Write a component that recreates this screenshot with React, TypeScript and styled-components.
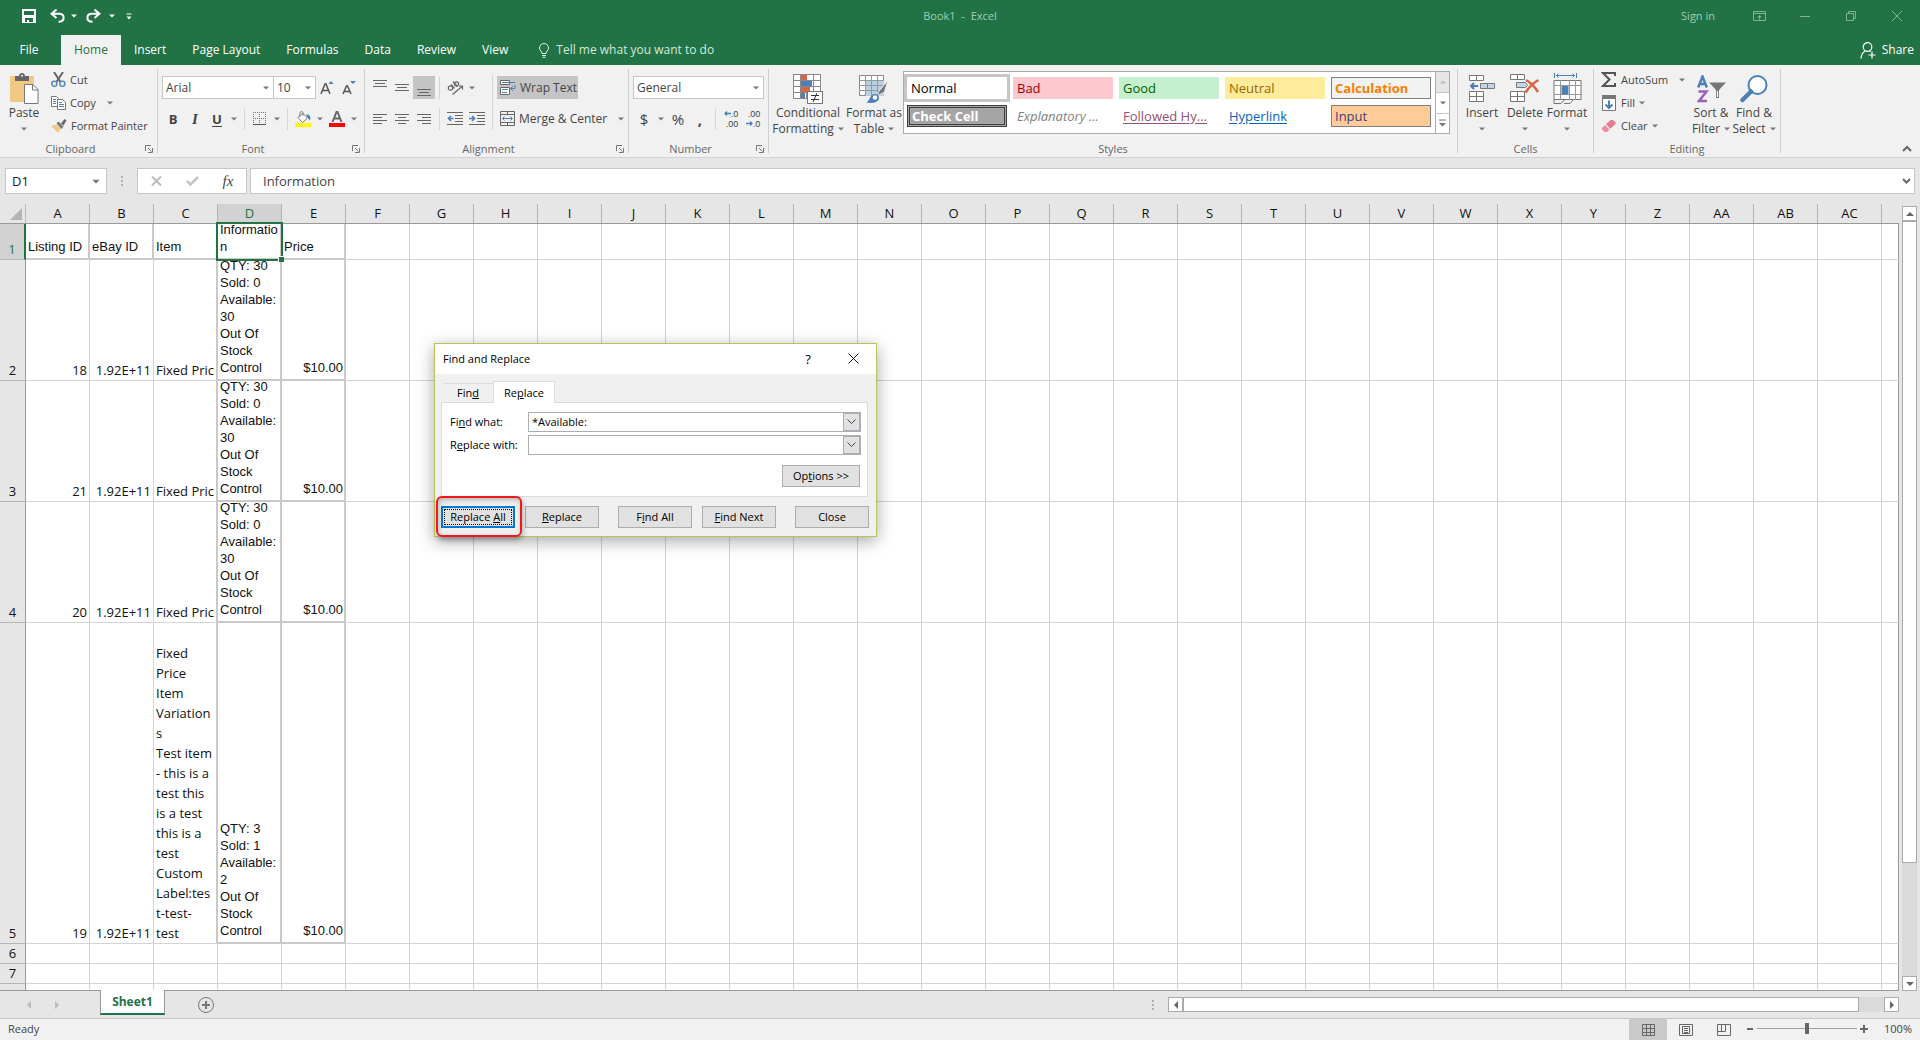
import React from "react";
import styled, { createGlobalStyle, css } from "styled-components";

const UI = `"Open Sans", "Noto Sans", sans-serif`;
const ARIAL = `"Liberation Sans", Arial, sans-serif`;
const GREEN = "#217346";
const INK = "#444444";
const GREY = "#777777";
const BLUE = "#4a7fb8";

const Global = createGlobalStyle`
  * { box-sizing: border-box; }
  html, body { margin: 0; height: 100%; }
  #root { height: 100vh; }
  body { background: #e6e6e6; overflow: hidden; }
  button, input, select { font: inherit; color: inherit; margin: 0; padding: 0; border: 0; background: none; border-radius: 0; }
  svg { display: block; flex: none; }
`;

const Window = styled.div`
  display: flex;
  flex-direction: column;
  height: 100%;
  font: 12px/16px ${UI};
  color: ${INK};
`;

/* ---------- title bar ---------- */
const TitleBar = styled.header`
  display: grid;
  grid-template-columns: 1fr auto 1fr;
  align-items: center;
  height: 35px;
  padding-bottom: 3px;
  background: ${GREEN};
  color: #a0cdb2;
  font-size: 11px;
`;
const QuickAccess = styled.div`
  display: flex;
  align-items: center;
  padding-left: 14px;
  color: #fff;
`;
const QuickButton = styled.button<{ $w?: number }>`
  display: grid;
  place-items: center;
  width: ${(p) => p.$w ?? 26}px;
  height: 22px;
`;
const Title = styled.h1`
  margin: 0;
  font: inherit;
  white-space: pre;
`;
const WindowButtons = styled.div`
  display: flex;
  justify-content: flex-end;
  align-items: center;
`;
const SignIn = styled.button`
  margin-right: 21px;
`;
const WindowButton = styled.button`
  display: grid;
  place-items: center;
  width: 46px;
  height: 28px;
  color: #7fb394;
`;

/* ---------- ribbon tabs ---------- */
const TabStrip = styled.nav`
  display: flex;
  height: 30px;
  background: ${GREEN};
  color: #fff;
  font-size: 12px;
`;
const RibbonTab = styled.button<{ $active?: boolean; $file?: boolean }>`
  padding: 0 13px;
  ${(p) => p.$file && css`width: 61px; padding: 0 3px 0 0;`}
  ${(p) => p.$active && css`background: #f1f1f1; color: ${GREEN};`}
`;
const TellMe = styled.button`
  display: flex;
  align-items: center;
  gap: 6px;
  padding-left: 17px;
  color: #d3e8db;
`;
const Share = styled.button`
  display: flex;
  align-items: center;
  gap: 6px;
  margin-left: auto;
  padding-right: 6px;
`;

/* ---------- ribbon ---------- */
const Ribbon = styled.div`
  display: flex;
  height: 93px;
  background: #f1f1f1;
  border-bottom: 1px solid #d2d2d2;
`;
const GroupBox = styled.section<{ $w: number }>`
  display: flex;
  flex-direction: column;
  flex: none;
  width: ${(p) => p.$w}px;
`;
const GroupBody = styled.div`
  display: flex;
  height: 76px;
`;
const GroupFoot = styled.div<{ $launch?: boolean }>`
  display: grid;
  grid-template-columns: ${(p) => (p.$launch ? "1fr 16px" : "1fr")};
  align-items: center;
  justify-items: center;
  height: 16px;
  color: #666;
  font-size: 11px;
`;
const GroupRule = styled.div`
  width: 1px;
  margin: 4px 0;
  background: #d0d0d0;
`;
const Rows = styled.div<{ $pad?: number }>`
  display: flex;
  flex-direction: column;
  gap: 8px;
  padding: 11px 0 0 ${(p) => p.$pad ?? 0}px;
`;
const Row = styled.div`
  display: flex;
  align-items: center;
  height: 23px;
`;
const Rule = styled.div<{ $tall?: boolean }>`
  flex: none;
  width: 1px;
  height: ${(p) => (p.$tall ? 55 : 22)}px;
  margin: ${(p) => (p.$tall ? "10px 4px 0" : "0 4px")};
  background: #d4d4d4;
`;
const IconButton = styled.button<{ $on?: boolean }>`
  display: grid;
  place-items: center;
  flex: none;
  width: 22px;
  height: 23px;
  background: ${(p) => (p.$on ? "#c5c5c5" : "none")};
`;
const CaretButton = styled.button`
  display: grid;
  place-items: center;
  flex: none;
  width: 12px;
  height: 22px;
`;
const Glyph = styled.span<{ $b?: boolean; $i?: boolean; $u?: boolean; $size?: number }>`
  font-size: ${(p) => p.$size ?? 13}px;
  font-weight: ${(p) => (p.$b ? 700 : 400)};
  font-family: ${(p) => (p.$i ? `"Liberation Serif", serif` : UI)};
  font-style: ${(p) => (p.$i ? "italic" : "normal")};
  text-decoration: ${(p) => (p.$u ? "underline" : "none")};
  text-underline-offset: 2px;
`;
const SmallStack = styled.div<{ $pad?: number; $w?: number }>`
  display: flex;
  flex-direction: column;
  align-items: flex-start;
  flex: none;
  width: ${(p) => (p.$w ? `${p.$w}px` : "auto")};
  padding: 3px 0 0 ${(p) => p.$pad ?? 0}px;
`;
const SmallButton = styled.button<{ $on?: boolean; $wide?: boolean }>`
  display: flex;
  align-items: center;
  gap: 4px;
  height: 23px;
  padding: 0 3px;
  white-space: nowrap;
  font-size: 11px;
  background: ${(p) => (p.$on ? "#c5c5c5" : "none")};
  svg:last-child:not(:first-child) { margin-left: ${(p) => (p.$wide ? 7 : 0)}px; }
`;
const ToggleText = styled(SmallButton)`
  width: 81px;
  font-size: 12px;
`;
const MergeButton = styled(SmallButton)`
  font-size: 12px;
`;
const BigButton = styled.button<{ $w: number }>`
  display: flex;
  flex-direction: column;
  align-items: center;
  flex: none;
  width: ${(p) => p.$w}px;
  padding-top: 7px;
  white-space: nowrap;
`;
const BigIcon = styled.span`
  display: grid;
  place-items: center;
  height: 33px;
`;
const BigLine = styled.span`
  display: flex;
  align-items: center;
  justify-content: center;
  gap: 4px;
  height: 16px;
`;
const ComboWrap = styled.div<{ $w: number }>`
  display: grid;
  align-items: center;
  flex: none;
  width: ${(p) => p.$w}px;
  height: 23px;
  background: #fff;
  border: 1px solid #c6c6c6;
  > * { grid-area: 1 / 1; }
  > svg { justify-self: end; margin-right: 4px; pointer-events: none; }
  & + & { border-left: 0; }
`;
const ComboSelect = styled.select`
  appearance: none;
  width: 100%;
  height: 21px;
  padding-left: 3px;
`;

/* ---------- styles gallery ---------- */
const Gallery = styled.div`
  display: flex;
  width: 547px;
  height: 63px;
  margin: 6px 0 0 2px;
  background: #fff;
  border: 1px solid #ababab;
`;
const GalleryGrid = styled.div`
  display: grid;
  grid-template-columns: repeat(5, 100px);
  grid-auto-rows: 22px;
  gap: 6px;
  flex: 1;
  padding: 5px 0 0 3px;
`;
const StyleTile = styled.button<{ $bg: string; $fg: string; $kind?: string }>`
  padding: 0 4px 1px;
  font-size: 13px;
  line-height: 18px;
  text-align: left;
  white-space: nowrap;
  background: ${(p) => p.$bg};
  color: ${(p) => p.$fg};
  ${(p) => p.$kind === "selected" && css`box-shadow: 0 0 0 3px #c6c6c6;`}
  ${(p) => p.$kind === "boxed" && css`border: 1px solid #7f7f7f; padding: 0 3px;`}
  ${(p) => p.$kind === "double" && css`border: 3px double #3f3f3f; padding: 0 2px; line-height: 14px;`}
  ${(p) => p.$kind === "link" && css`text-decoration: underline; text-underline-offset: 2px;`}
  ${(p) => p.$kind === "italic" && css`font-style: italic;`}
  font-weight: ${(p) => (p.$fg === "#fa7d00" || p.$fg === "#ffffff" ? 700 : 400)};
`;
const GalleryScroll = styled.div`
  display: grid;
  grid-template-rows: repeat(3, 1fr);
  width: 14px;
  border-left: 1px solid #ababab;
`;
const GalleryArrow = styled.button<{ $off?: boolean }>`
  display: grid;
  place-items: center;
  background: ${(p) => (p.$off ? "#e6e6e6" : "#fff")};
  & + & { border-top: 1px solid #c6c6c6; }
`;
const Collapse = styled.button`
  align-self: flex-end;
  margin: 0 8px 5px auto;
`;

/* ---------- formula bar ---------- */
const FormulaBar = styled.div`
  display: flex;
  align-items: center;
  height: 46px;
  padding: 0 5px;
  font: 13px/20px ${UI};
`;
const NameBox = styled.label`
  display: flex;
  align-items: center;
  width: 102px;
  height: 26px;
  padding: 0 6px;
  background: #fff;
  border: 1px solid #c6c6c6;
`;
const NameInput = styled.input`
  flex: 1;
  min-width: 0;
  color: #222;
`;
const Grip = styled.div`
  display: grid;
  place-items: center;
  width: 30px;
`;
const FormulaActions = styled.div`
  display: flex;
  align-items: center;
  justify-content: space-around;
  width: 110px;
  height: 26px;
  margin-right: 3px;
  background: #fff;
  border: 1px solid #c6c6c6;
`;
const FormulaField = styled.label`
  display: flex;
  align-items: center;
  flex: 1;
  height: 26px;
  padding: 0 3px 0 12px;
  background: #fff;
  border: 1px solid #c6c6c6;
`;
const FormulaInput = styled.input`
  flex: 1;
`;

/* ---------- sheet ---------- */
const SheetArea = styled.main`
  display: flex;
  flex: 1;
  min-height: 0;
`;
const SheetFrame = styled.div`
  flex: 1;
  overflow: hidden;
  border-bottom: 1px solid #999;
`;
const Sheet = styled.table`
  width: 100%;
  table-layout: fixed;
  border-collapse: separate;
  border-spacing: 0;
  color: #111;
`;
const Corner = styled.th`
  width: 26px;
  height: 20px;
  padding: 0 3px 3px 0;
  vertical-align: bottom;
  border-right: 1px solid #bbb;
  border-bottom: 1px solid #999;
  svg { margin-left: auto; }
`;
const ColHead = styled.th<{ $on?: boolean; $fill?: boolean }>`
  width: ${(p) => (p.$fill ? "auto" : "64px")};
  height: 20px;
  padding: 0 0 1px;
  font: 13px/18px ${UI};
  color: ${(p) => (p.$on ? GREEN : "#111")};
  background: ${(p) => (p.$on ? "#d2d2d2" : "#e6e6e6")};
  border-right: ${(p) => (p.$fill ? "0" : "1px solid #b4b4b4")};
  border-bottom: 1px solid #999;
`;
const RowHead = styled.th<{ $h: number; $on?: boolean }>`
  height: ${(p) => p.$h}px;
  padding: 0 0 1px;
  vertical-align: bottom;
  font: 13px/18px ${UI};
  color: ${(p) => (p.$on ? GREEN : "#111")};
  background: ${(p) => (p.$on ? "#d2d2d2" : "#e6e6e6")};
  border-bottom: 1px solid #b4b4b4;
  border-right: ${(p) => (p.$on ? `2px solid ${GREEN}` : "1px solid #999")};
`;
const Cell = styled.td<{ $r?: boolean; $b?: boolean; $edge?: boolean; $sel?: boolean }>`
  padding: 0;
  vertical-align: bottom;
  background: #fff;
  border-right: ${(p) => (p.$edge ? "1px solid #999" : p.$r ? "2px solid #c9c9c9" : "1px solid #d4d4d4")};
  border-bottom: ${(p) => (p.$b ? "2px solid #c9c9c9" : "1px solid #d4d4d4")};
  ${(p) => p.$sel && css`
    position: relative;
    &::before {
      content: "";
      position: absolute;
      inset: -2px -3px -3px -2px;
      border: 2px solid ${GREEN};
    }
    &::after {
      content: "";
      position: absolute;
      right: -4px;
      bottom: -4px;
      width: 5px;
      height: 5px;
      background: ${GREEN};
      box-shadow: -1px -1px 0 #fff;
    }
  `}
`;
const CellText = styled.div<{ $h: number; $arial?: boolean; $right?: boolean }>`
  display: flex;
  flex-direction: column;
  justify-content: flex-end;
  height: ${(p) => p.$h}px;
  padding: 0 ${(p) => (p.$right && p.$arial ? 1 : 2)}px ${(p) => (p.$arial ? 3 : 0)}px 2px;
  overflow: ${(p) => (p.$arial ? "visible" : "hidden")};
  white-space: pre;
  font: ${(p) => (p.$arial ? `13px/17px ${ARIAL}` : `13px/20px ${UI}`)};
  text-align: ${(p) => (p.$right ? "right" : "left")};
`;
const VScroll = styled.div`
  display: flex;
  flex-direction: column;
  width: 21px;
  padding: 2px 3px 0;
`;
const ScrollArrow = styled.button`
  display: grid;
  place-items: center;
  flex: none;
  width: 15px;
  height: 15px;
  background: #fff;
  border: 1px solid #ababab;
`;
const VTrack = styled.div`
  flex: 1;
  background: #dadada;
`;
const VThumb = styled.div`
  height: 85%;
  background: #fff;
  border: 1px solid #ababab;
`;
const SheetBar = styled.div`
  display: flex;
  height: 27px;
`;
const SheetNav = styled.div`
  display: flex;
  align-items: center;
  gap: 18px;
  width: 100px;
  padding-left: 24px;
`;
const NavArrow = styled.button`
  display: grid;
  place-items: center;
  width: 10px;
  height: 20px;
`;
const SheetTab = styled.button`
  width: 65px;
  height: 25px;
  margin-top: -1px;
  position: relative;
  background: #fff;
  border: 1px solid #999;
  border-top: 0;
  border-bottom: 2px solid ${GREEN};
  color: ${GREEN};
  font-size: 12px;
  font-weight: 700;
`;
const AddSheet = styled.button`
  margin-left: 33px;
`;
const HScroll = styled.div`
  display: flex;
  align-items: center;
  flex: 0 1 761px;
  margin: 0 21px 0 auto;
`;
const HTrack = styled.div`
  flex: 1;
  height: 15px;
  background: #dadada;
`;
const HThumb = styled.div`
  width: 96.4%;
  height: 15px;
  background: #fff;
  border: 1px solid #ababab;
`;
const StatusBar = styled.footer`
  display: flex;
  align-items: center;
  height: 22px;
  padding: 0 8px 2px;
  background: #f1f1f1;
  border-top: 1px solid #c6c6c6;
  font-size: 11px;
`;
const ViewButtons = styled.div`
  display: flex;
  align-self: flex-start;
  margin-left: auto;
`;
const ViewButton = styled.button<{ $on?: boolean }>`
  display: grid;
  place-items: center;
  width: 38px;
  height: 21px;
  background: ${(p) => (p.$on ? "#c9c9c9" : "none")};
`;
const ZoomButton = styled.button`
  display: grid;
  place-items: center;
  width: 14px;
  height: 20px;
`;
const ZoomRange = styled.input`
  appearance: none;
  width: 100px;
  height: 12px;
  background: linear-gradient(#a0a0a0, #a0a0a0) center / 100% 1px no-repeat;
  &::-webkit-slider-thumb {
    appearance: none;
    width: 4px;
    height: 11px;
    background: #666;
  }
`;
const ZoomText = styled.button`
  width: 41px;
  text-align: right;
`;

/* ---------- dialog ---------- */
const Dialog = styled.div`
  position: absolute;
  left: 434px;
  top: 343px;
  width: 443px;
  background: #f0f0f0;
  border: 1px solid #bcc257;
  box-shadow: 0 4px 16px rgba(0, 0, 0, 0.35);
  color: #000;
  font: 12px/16px ${UI};
`;
const DialogTitle = styled.div`
  display: flex;
  align-items: center;
  height: 30px;
  padding: 0 13px 1px 8px;
  background: #fff;
`;
const DialogName = styled.h2`
  flex: 1;
  margin: 0;
  font: inherit;
  font-size: 11px;
`;
const DialogIcon = styled.button`
  display: grid;
  place-items: center;
  width: 20px;
  height: 24px;
  & + & { margin-left: 25px; }
`;
const DialogBody = styled.div`
  padding: 7px 7px 8px 6px;
  font-size: 11px;
`;
const DialogTabs = styled.div`
  display: flex;
  align-items: flex-end;
  padding-left: 2px;
`;
const DialogTab = styled.button<{ $on?: boolean }>`
  width: ${(p) => (p.$on ? 62 : 50)}px;
  height: ${(p) => (p.$on ? 22 : 19)}px;
  border: 1px solid #dcdcdc;
  border-bottom: 0;
  ${(p) => p.$on ? css`background: #fff; margin-bottom: -1px;` : css`border-left: 0; border-right: 0;`}
`;
const DialogPanel = styled.div`
  height: 95px;
  padding: 9px 6px 0 8px;
  margin-right: 1px;
  background: #fff;
  border: 1px solid #dcdcdc;
`;
const Field = styled.div`
  display: grid;
  grid-template-columns: 78px 1fr;
  align-items: center;
  margin-bottom: 3px;
`;
const FieldBox = styled.div`
  display: flex;
  height: 20px;
  background: #fff;
  border: 1px solid #abadb3;
`;
const FieldInput = styled.input`
  flex: 1;
  min-width: 0;
  padding-left: 3px;
`;
const FieldDrop = styled.button`
  display: grid;
  place-items: center;
  width: 17px;
  background: #e1e1e1;
  border: 1px solid #abadb3;
`;
const PushButton = styled.button<{ $focus?: boolean; $w?: number }>`
  display: block;
  width: ${(p) => p.$w ?? 74}px;
  height: 22px;
  background: #e1e1e1;
  border: 1px solid #adadad;
  ${(p) => p.$focus && css`border: 2px solid #0078d7; outline: 1px dotted #000; outline-offset: -4px;`}
`;
const OptionsRow = styled.div`
  display: flex;
  justify-content: flex-end;
  padding: 7px 1px 0 0;
`;
const DialogActions = styled.div`
  display: flex;
  padding-top: 9px;
  gap: 10px;
`;
const Spacer = styled.div`
  width: 9px;
  margin-right: -10px;
`;
const Highlight = styled.div`
  position: absolute;
  left: 1px;
  top: 152px;
  width: 86px;
  height: 41px;
  border: 2px solid #f01818;
  border-radius: 6px;
  box-shadow: 1px 3px 5px rgba(0, 0, 0, 0.3), inset 1px 2px 5px rgba(0, 0, 0, 0.25);
  pointer-events: none;
`;

/* ---------- icons ---------- */
const Caret = ({ c = GREY, big }: { c?: string; big?: boolean }) => (
  <svg width={big ? 8 : 6} height={big ? 5 : 4} viewBox="0 0 6 4"><path d="M0 0.5h6L3 3.5z" fill={c} /></svg>
);
const Tri = ({ d, c = "#666" }: { d: "l" | "r" | "u" | "d"; c?: string }) => {
  const p = { l: "M6 0v8L2 4z", r: "M2 0v8l4-4z", u: "M0 6h8L4 2z", d: "M0 2h8L4 6z" }[d];
  return <svg width="8" height="8" viewBox="0 0 8 8"><path d={p} fill={c} /></svg>;
};
const Launcher = () => (
  <svg width="8" height="8" viewBox="0 0 8 8" fill="none" stroke={GREY}>
    <path d="M0.5 6V0.5H6M3 3l3.5 3.5M7.5 3v4.5H3" />
  </svg>
);
const Lines = ({ rows, ys, w = 14, h = 16 }: { rows: [number, number][]; ys: number[]; w?: number; h?: number }) => (
  <svg width={w} height={h} viewBox={`0 0 ${w} ${h}`} shapeRendering="crispEdges">
    {rows.map(([a, b], i) => <rect key={i} x={a} y={ys[i]} width={b - a} height="1" fill="#666" />)}
  </svg>
);
const SaveIcon = () => (
  <svg width="14" height="14" viewBox="0 0 14 14"><path fill="#fff" fillRule="evenodd" d="M0 0h14v14H0zM2 2v4h10V2zM3 9v4h2v-2h2v2h4V9z" /></svg>
);
const UndoIcon = ({ flip }: { flip?: boolean }) => (
  <svg width="15" height="14" viewBox="0 0 15 14" fill="none" stroke="#fff" strokeWidth="2">
    <g transform={flip ? "matrix(-1 0 0 1 15 0)" : undefined}><path d="M6.5 0.5L1.5 4.7l5 4.3M2 4.7h7c3 0 4.600 1.500 4.600 4S12 12.700 8.500 12.700" /></g>
  </svg>
);
const CustomizeIcon = () => (
  <svg width="6" height="7" viewBox="0 0 6 7"><path d="M0.500 0.500h5v1h-5zM0.500 3.500h5L3 6.500z" fill="#fff" /></svg>
);
const BulbIcon = () => (
  <svg width="12" height="15" viewBox="0 0 12 15" fill="none" stroke="#e6f2ea">
    <path d="M4 10.500c0-2-2.500-3-2.500-5.500a4.500 4.500 0 0 1 9 0c0 2.500-2.500 3.500-2.500 5.500zM4 12.500h4M4.500 14.300h3" />
  </svg>
);
const ShareIcon = () => (
  <svg width="16" height="17" viewBox="0 0 16 17" fill="none" stroke="#fff" strokeWidth="1.200">
    <circle cx="7.500" cy="5" r="4.300" /><path d="M1 16.500c.3-4 2-6.300 4.500-7.500M9.500 9l1 .8M12 9.500v7M8.500 13h7" />
  </svg>
);
const PasteIcon = () => (
  <svg width="30" height="31" viewBox="0 0 30 31">
    <path d="M1 3h24v26H1z" fill="#f0c982" /><path d="M6 3h4c0-4 6-4 6 0h4v5H6z" fill="#666" /><circle cx="13" cy="2.800" r="1" fill="#f1f1f1" />
    <path d="M15.500 11.500h8.500l5 5V30.500H15.500z" fill="#fff" stroke="#777" /><path d="M23.500 11.500v5.500h5.500" fill="none" stroke="#777" />
  </svg>
);
const CutIcon = () => (
  <svg width="15" height="15" viewBox="0 0 15 15" fill="none">
    <path d="M3 0l6.500 10M12 0L5.500 10" stroke="#666" strokeWidth="2" />
    <circle cx="3.300" cy="11.700" r="2.600" stroke={BLUE} strokeWidth="1.300" /><circle cx="11.300" cy="11.700" r="2.600" stroke={BLUE} strokeWidth="1.300" />
  </svg>
);
const CopyIcon = () => (
  <svg width="15" height="14" viewBox="0 0 15 14" fill="#fff" stroke="#777">
    <path d="M0.500 0.500h5l2 2v8h-7z" /><path d="M6.500 3.500h5l3 3v7h-8z" />
    <path d="M2 3.500h3M2 5.500h3M2 7.500h3M8 6.500h3M8 8.500h5M8 10.500h5" stroke={BLUE} />
  </svg>
);
const BrushIcon = () => (
  <svg width="16" height="14" viewBox="0 0 16 14">
    <path d="M0 7l5-1.500 5 4L7 14C4.500 11 2.500 9 0 7z" fill="#f0c982" />
    <path d="M5.500 4.500l2-2 5 5-2 2.500z" fill="#777" /><path d="M10 4.500l3.500-4.500 2 1.500-3 5z" fill="#666" />
  </svg>
);
const GrowIcon = ({ down }: { down?: boolean }) => (
  <svg width="15" height="16" viewBox="0 0 15 16">
    <path d={down ? "M1 14L4.500 6h1L9 14M2.500 11.500h5" : "M1 14L5 4h1l4 10M2.500 10.500h6"} fill="none" stroke="#555" strokeWidth="1.500" />
    <path d={down ? "M8 1h6l-3 3z" : "M8.500 4h5L11 1z"} fill={BLUE} />
  </svg>
);
const BorderIcon = () => (
  <svg width="14" height="14" viewBox="0 0 14 14" fill="none" stroke="#777">
    <path d="M0 0.500h13M0 6.500h13M0.500 0v13M6.500 0v13M12.500 0v13" strokeDasharray="1 1" /><path d="M0 12.500h13" stroke="#555" />
  </svg>
);
const FillIcon = () => (
  <svg width="17" height="16" viewBox="0 0 17 16">
    <path d="M3 6.500L7.500 2l5 5-5 4.500z" fill="#fff" stroke="#777" /><path d="M5 6V2.500c0-3 3-3 3 0V5" fill="none" stroke="#777" />
    <path d="M11 3.500c4-.5 5 2 4 6l-2.500-3z" fill={BLUE} /><path d="M0 12h16v4H0z" fill="#ff0" />
  </svg>
);
const FontColorIcon = () => (
  <svg width="16" height="16" viewBox="0 0 16 16">
    <path d="M3.500 11L7.500 1h1l4 10M5 7.500h6" fill="none" stroke="#666" strokeWidth="2" /><path d="M0 12h16v4H0z" fill="#f00" />
  </svg>
);
const OrientIcon = () => (
  <svg width="17" height="16" viewBox="0 0 17 16" fill="none" stroke="#666" strokeWidth="1.200">
    <circle cx="3.500" cy="8" r="2.200" /><path d="M4 4.500l3.500 4M6 1.500l4.500 5" /><circle cx="9.500" cy="4" r="2.200" />
    <path d="M5.500 14.500l9.500-8M12 6h3.500v3.500" />
  </svg>
);
const IndentIcon = ({ inc }: { inc?: boolean }) => (
  <svg width="17" height="13" viewBox="0 0 17 13" fill="none">
    <path d="M0 0.500h16M8 3.500h8M8 6.500h8M8 9.500h8M0 12.500h16" stroke="#666" />
    <path d={inc ? "M0 6.500h5M3 4l2.500 2.500L3 9" : "M6.500 6.500h-5M4 4L1.500 6.500 4 9"} stroke={BLUE} strokeWidth="1.600" />
  </svg>
);
const WrapIcon = () => (
  <svg width="16" height="15" viewBox="0 0 16 15" fill="none">
    <path d="M0.500 0.500h9v4h-9zM0.500 7.500h9v7h-9z" fill="#fff" stroke="#666" />
    <path d="M2 2.500h13M2 9.500h6M2 12.500h5M15 5v3.500h-4M13 6l-2.500 2.500L13 11" stroke={BLUE} />
  </svg>
);
const MergeIcon = () => (
  <svg width="15" height="15" viewBox="0 0 15 15" fill="none">
    <path d="M0.500 0.500h14v14H0.500zM0.500 3.500h14M0.500 11.500h14M7.500 0.500v3M7.500 11.500v3" stroke="#666" />
    <path d="M3 7.500h9M4.500 5.500l-2 2 2 2M10.500 5.500l2 2-2 2" stroke={BLUE} />
  </svg>
);
const DecimalText = styled.span`
  display: grid;
  justify-items: end;
  font: 9px/10px ${ARIAL};
`;
const DecimalLine = styled.span`
  display: flex;
  align-items: center;
  height: 10px;
`;
const SmallArrow = ({ right }: { right?: boolean }) => (
  <svg width="7" height="5" viewBox="0 0 7 5" fill="none" stroke={BLUE} strokeWidth="1.300">
    <path d={right ? "M0 2.500h6M4 0.500l2 2-2 2" : "M7 2.500H1M3 0.500l-2 2 2 2"} />
  </svg>
);
const ConditionalIcon = () => (
  <svg width="30" height="31" viewBox="0 0 30 31" shapeRendering="crispEdges">
    <path d="M0.500 1.500h27v24h-27z" fill="#fff" stroke="#888" />
    <path d="M7.500 1v25M13.500 1v25M20.500 1v25M0 7.500h28M0 13.500h28M0 19.500h28" stroke="#888" />
    <path d="M8 2h6v5H8zM8 14h9v5H8z" fill="#d86545" /><path d="M8 8h11v5H8zM8 20h4v5H8z" fill={BLUE} />
    <path d="M14.500 18.500h15v12h-15z" fill="#fff" stroke="#777" />
    <path d="M18 22.500h8M18 26.500h8M24 20l-4 9" stroke="#333" shapeRendering="auto" />
  </svg>
);
const TableIcon = () => (
  <svg width="30" height="30" viewBox="0 0 30 30">
    <path d="M0.500 1.500h24v20h-24z" fill="#fff" stroke="#888" /><path d="M7 7h18v15H7z" fill="#b9cfe6" />
    <path d="M6.500 1v21M12.500 1v21M18.500 1v21M0 6.500h25M0 11.500h25M0 16.500h25" stroke="#999" fill="none" />
    <path d="M29 6l-3.500 12-5 3-2-2z" fill="#777" stroke="#f1f1f1" /><path d="M7 28.500c4-1 4-9 9-8.500 4 .5 5 4 3 6.500s-7 3-12 2z" fill={BLUE} /><circle cx="16" cy="23.500" r="2.300" fill="#fff" />
  </svg>
);
const InsertIcon = () => (
  <svg width="27" height="28" viewBox="0 0 27 28" fill="#fff" stroke="#777">
    <path d="M0.500 0.500h14v5h-14zM7.500 0.500v5M0.500 16.500h14v10h-14zM7.500 16.500v10M0.500 21.500h14" />
    <path d="M11.500 8.500h14v5h-14zM18.500 8.500v5" fill="#c0d4ea" /><path d="M9 11H2M5 8l-3 3 3 3" fill="none" stroke={BLUE} strokeWidth="2" />
  </svg>
);
const DeleteIcon = () => (
  <svg width="30" height="29" viewBox="0 0 30 29" fill="#fff" stroke="#777">
    <path d="M0.500 0.500h14v5h-14zM7.500 0.500v5M0.500 17.500h14v10h-14zM7.500 17.500v10M0.500 22.500h14" /><path d="M6.500 8.500h9l2 3-2 2h-9z" fill="#c0d4ea" />
    <path d="M16 6c5 3 9 7 12 12M28.500 6C23 9 19 13 15.500 18.500" fill="none" stroke="#d9623f" strokeWidth="2.500" />
  </svg>
);
const FormatIcon = () => (
  <svg width="29" height="31" viewBox="0 0 29 31" fill="none" stroke="#777">
    <path d="M1 7.500h27v19H1z" fill="#fff" /><path d="M7.500 7v20M16.500 7v20M22.500 7v20M1 12.500h27M1 21.500h27" stroke="#999" />
    <path d="M8.500 13h7v8.500h-7z" fill={BLUE} stroke="none" /><path d="M1 26.500v4h7l3-3.500M11 30.500h6l3-3.500" />
    <path d="M1.500 0v5M23.500 0v5M3 2.500h19M5.500 0.500l-2 2 2 2M19.500 0.500l2 2-2 2" stroke={BLUE} />
  </svg>
);
const SigmaIcon = () => (
  <svg width="16" height="16" viewBox="0 0 16 16" fill="none" stroke="#555" strokeWidth="2"><path d="M14 4V1H2l6.500 6.500L2 14h12v-3" /></svg>
);
const FillDownIcon = () => (
  <svg width="16" height="16" viewBox="0 0 16 16"><path d="M1.500 0.500h13v15h-13z" fill="#fff" stroke="#777" /><path d="M1 0h14v4H1z" fill="#777" /><path d="M8 5.500v7M4.500 9.500L8 13l3.500-3.500" fill="none" stroke={BLUE} strokeWidth="2" /></svg>
);
const EraserIcon = () => (
  <svg width="16" height="14" viewBox="0 0 16 14"><path d="M1 9l3-3 4.500 4.500L6 13H3.500L1 10.500z" fill="#ea8ea0" /><path d="M5 5.200L9.500 1H12l2.500 2.500V5L9.500 9.700z" fill="#e67c90" /></svg>
);
const SortIcon = () => (
  <svg width="29" height="28" viewBox="0 0 29 28" fill="none" strokeWidth="2.500">
    <path d="M1.200 12.500L5.500 1.500l4.300 11M3 9h5" stroke={BLUE} /><path d="M1.500 16.500h8L2 26h8" stroke="#9b5fb5" />
    <path d="M12 7.500h17l-7 7.500v8h-3v-8z" fill="#777" /><path d="M20.500 16v6" stroke="#fff" strokeWidth="1.200" />
  </svg>
);
const FindIcon = () => (
  <svg width="28" height="28" viewBox="0 0 28 28" fill="none" stroke={BLUE}><circle cx="17.500" cy="10" r="9" fill="#fff" strokeWidth="2" /><path d="M11 16.500L2.500 25" strokeWidth="4.500" strokeLinecap="round" /></svg>
);

const Carets = () => <CaretButton aria-label="More"><Caret /></CaretButton>;

function Group({ w, label, launch, children }: { w: number; label: string; launch?: boolean; children: React.ReactNode }) {
  return (
    <>
      <GroupBox $w={w - 1} aria-label={label}>
        <GroupBody>{children}</GroupBody>
        <GroupFoot $launch={launch}><span>{label}</span>{launch && <Launcher />}</GroupFoot>
      </GroupBox>
      <GroupRule />
    </>
  );
}

function Big({ w, icon, lines }: { w: number; icon: React.ReactNode; lines: string[] }) {
  return (
    <BigButton $w={w}>
      <BigIcon>{icon}</BigIcon>
      <BigLine>{lines[0]}</BigLine>
      <BigLine>{lines[1]}<Caret /></BigLine>
    </BigButton>
  );
}

function Combo({ w, value, label }: { w: number; value: string; label: string }) {
  return (
    <ComboWrap $w={w}>
      <ComboSelect aria-label={label} defaultValue={value}><option>{value}</option></ComboSelect>
      <Caret />
    </ComboWrap>
  );
}

const TILES: [string, string, string, string?][] = [
  ["Normal", "#ffffff", "#000000", "selected"],
  ["Bad", "#ffc7ce", "#9c0006"],
  ["Good", "#c6efce", "#006100"],
  ["Neutral", "#ffeb9c", "#9c6500"],
  ["Calculation", "#f2f2f2", "#fa7d00", "boxed"],
  ["Check Cell", "#a5a5a5", "#ffffff", "double"],
  ["Explanatory ...", "#ffffff", "#7f7f7f", "italic"],
  ["Followed Hy...", "#ffffff", "#954f72", "link"],
  ["Hyperlink", "#ffffff", "#0563c1", "link"],
  ["Input", "#ffcc99", "#3f3f76", "boxed"],
];

function RibbonBar() {
  return (
    <Ribbon>
      <Group w={158} label="Clipboard" launch>
        <Big w={48} icon={<PasteIcon />} lines={["Paste", ""]} />
        <SmallStack>
          <SmallButton><CutIcon />Cut</SmallButton>
          <SmallButton $wide><CopyIcon />Copy<Caret /></SmallButton>
          <SmallButton><BrushIcon />Format Painter</SmallButton>
        </SmallStack>
      </Group>
      <Group w={207} label="Font" launch>
        <Rows $pad={4}>
          <Row>
            <Combo w={112} value="Arial" label="Font" />
            <Combo w={42} value="10" label="Font size" />
            <IconButton aria-label="Increase font size"><GrowIcon /></IconButton>
            <IconButton aria-label="Decrease font size"><GrowIcon down /></IconButton>
          </Row>
          <Row>
            <IconButton><Glyph $b>B</Glyph></IconButton>
            <IconButton><Glyph $i $b $size={15}>I</Glyph></IconButton>
            <IconButton><Glyph $b $u>U</Glyph></IconButton>
            <Carets /><Rule />
            <IconButton aria-label="Borders"><BorderIcon /></IconButton>
            <Carets /><Rule />
            <IconButton aria-label="Fill color"><FillIcon /></IconButton>
            <Carets />
            <IconButton aria-label="Font color"><FontColorIcon /></IconButton>
            <Carets />
          </Row>
        </Rows>
      </Group>
      <Group w={264} label="Alignment" launch>
        <Rows $pad={4}>
          <Row>
            <IconButton aria-label="Top align"><Lines rows={[[0, 14], [2, 12], [0, 14]]} ys={[0, 3, 6]} /></IconButton>
            <IconButton aria-label="Middle align"><Lines rows={[[0, 14], [2, 12], [0, 14]]} ys={[4, 7, 10]} /></IconButton>
            <IconButton $on aria-label="Bottom align"><Lines rows={[[0, 14], [2, 12], [0, 14]]} ys={[9, 12, 15]} /></IconButton>
            <Rule />
            <IconButton aria-label="Orientation"><OrientIcon /></IconButton>
            <Carets />
          </Row>
          <Row>
            <IconButton aria-label="Align left"><Lines rows={[[0, 14], [0, 9], [0, 14], [0, 9]]} ys={[3, 6, 9, 12]} /></IconButton>
            <IconButton aria-label="Center"><Lines rows={[[0, 14], [3, 11], [0, 14], [3, 11]]} ys={[3, 6, 9, 12]} /></IconButton>
            <IconButton aria-label="Align right"><Lines rows={[[0, 14], [5, 14], [0, 14], [5, 14]]} ys={[3, 6, 9, 12]} /></IconButton>
            <Rule />
            <IconButton aria-label="Decrease indent"><IndentIcon /></IconButton>
            <IconButton aria-label="Increase indent"><IndentIcon inc /></IconButton>
          </Row>
        </Rows>
        <Rule $tall />
        <Rows>
          <Row><ToggleText $on><WrapIcon />Wrap Text</ToggleText></Row>
          <Row><MergeButton $wide><MergeIcon />Merge &amp; Center<Caret /></MergeButton></Row>
        </Rows>
      </Group>
      <Group w={140} label="Number" launch>
        <Rows $pad={4}>
          <Row><Combo w={131} value="General" label="Number format" /></Row>
          <Row>
            <IconButton><Glyph $size={15}>$</Glyph></IconButton>
            <Carets />
            <IconButton><Glyph $size={15}>%</Glyph></IconButton>
            <IconButton><Glyph $b $size={15}>,</Glyph></IconButton>
            <Rule />
            <IconButton aria-label="Increase decimal"><DecimalText><DecimalLine><SmallArrow />.0</DecimalLine><DecimalLine>.00</DecimalLine></DecimalText></IconButton>
            <IconButton aria-label="Decrease decimal"><DecimalText><DecimalLine>.00</DecimalLine><DecimalLine><SmallArrow right />.0</DecimalLine></DecimalText></IconButton>
          </Row>
        </Rows>
      </Group>
      <Group w={689} label="Styles">
        <Big w={78} icon={<ConditionalIcon />} lines={["Conditional", "Formatting"]} />
        <Big w={54} icon={<TableIcon />} lines={["Format as", "Table"]} />
        <Gallery>
          <GalleryGrid>
            {TILES.map(([t, bg, fg, kind]) => <StyleTile key={t} $bg={bg} $fg={fg} $kind={kind}>{t}</StyleTile>)}
          </GalleryGrid>
          <GalleryScroll>
            <GalleryArrow $off aria-label="Scroll up"><svg width="6" height="4" viewBox="0 0 6 4"><path d="M0 3.500h6L3 0.500z" fill="#bbb" /></svg></GalleryArrow>
            <GalleryArrow aria-label="Scroll down"><Caret /></GalleryArrow>
            <GalleryArrow aria-label="More styles"><svg width="7" height="8" viewBox="0 0 7 8"><path d="M0 0.500h7v1H0zM0 4h7L3.500 7.500z" fill="#777" /></svg></GalleryArrow>
          </GalleryScroll>
        </Gallery>
      </Group>
      <Group w={136} label="Cells">
        <Big w={48} icon={<InsertIcon />} lines={["Insert", ""]} />
        <Big w={38} icon={<DeleteIcon />} lines={["Delete", ""]} />
        <Big w={46} icon={<FormatIcon />} lines={["Format", ""]} />
      </Group>
      <Group w={187} label="Editing">
        <SmallStack $pad={4} $w={95}>
          <SmallButton $wide><SigmaIcon />AutoSum<Caret /></SmallButton>
          <SmallButton><FillDownIcon />Fill<Caret /></SmallButton>
          <SmallButton><EraserIcon />Clear<Caret /></SmallButton>
        </SmallStack>
        <Big w={44} icon={<SortIcon />} lines={["Sort &", "Filter"]} />
        <Big w={42} icon={<FindIcon />} lines={["Find &", "Select"]} />
      </Group>
      <Collapse aria-label="Collapse the ribbon">
        <svg width="10" height="7" viewBox="0 0 10 7" fill="none" stroke="#666" strokeWidth="2"><path d="M1 6l4-4 4 4" /></svg>
      </Collapse>
    </Ribbon>
  );
}

const COLS = [..."ABCDEFGHIJKLMNOPQRSTUVWXYZ", "AA", "AB", "AC"];
const STOCK = "QTY: 30\nSold: 0\nAvailable:\n30\nOut Of\nStock\nControl";
const ROWS: { n: number; h: number; v: string[] }[] = [
  { n: 1, h: 36, v: ["Listing ID", "eBay ID", "Item", "Informatio\nn", "Price"] },
  { n: 2, h: 121, v: ["18", "1.92E+11", "Fixed Pric", STOCK, "$10.00"] },
  { n: 3, h: 121, v: ["21", "1.92E+11", "Fixed Pric", STOCK, "$10.00"] },
  { n: 4, h: 121, v: ["20", "1.92E+11", "Fixed Pric", STOCK, "$10.00"] },
  { n: 5, h: 321, v: ["19", "1.92E+11",
    "Fixed\nPrice\nItem\nVariation\ns\nTest item\n- this is a\ntest this\nis a test\nthis is a\ntest\nCustom\nLabel:tes\nt-test-\ntest",
    "QTY: 3\nSold: 1\nAvailable:\n2\nOut Of\nStock\nControl", "$10.00"] },
  { n: 6, h: 20, v: [] },
  { n: 7, h: 20, v: [] },
  { n: 8, h: 20, v: [] },
];

function Grid() {
  return (
    <Sheet>
      <thead>
        <tr>
          <Corner aria-label="Select all"><svg width="12" height="12" viewBox="0 0 12 12"><path d="M12 0v12H0z" fill="#b4b4b4" /></svg></Corner>
          {COLS.map((c) => <ColHead key={c} $on={c === "D"}>{c}</ColHead>)}
          <ColHead $fill />
        </tr>
      </thead>
      <tbody>
        {ROWS.map(({ n, h, v }) => (
          <tr key={n}>
            <RowHead $h={h} $on={n === 1}>{n < 8 ? n : null}</RowHead>
            {COLS.map((c, i) => {
              const boxed = n === 1 ? i < 5 : n < 6 && (i === 3 || i === 4);
              const right = boxed || (n > 1 && n < 6 && i === 2);
              return (
                <Cell key={c} $r={right} $b={boxed} $sel={n === 1 && i === 3}>
                  {v[i] && (
                    <CellText $h={h - (boxed ? 2 : 1)} $arial={n === 1 || i > 2} $right={n > 1 && (i < 2 || i === 4)}>{v[i]}</CellText>
                  )}
                </Cell>
              );
            })}
            <Cell $edge />
          </tr>
        ))}
      </tbody>
    </Sheet>
  );
}

const DropMark = () => (
  <svg width="9" height="6" viewBox="0 0 9 6" fill="none" stroke="#444"><path d="M0.500 0.500l4 4 4-4" /></svg>
);

function FindReplace() {
  return (
    <Dialog role="dialog" aria-label="Find and Replace">
      <DialogTitle>
        <DialogName>Find and Replace</DialogName>
        <DialogIcon><Glyph $size={13}>?</Glyph></DialogIcon>
        <DialogIcon aria-label="Close dialog"><svg width="11" height="11" viewBox="0 0 11 11" stroke="#111"><path d="M0.500 0.500l10 10M10.500 0.500l-10 10" /></svg></DialogIcon>
      </DialogTitle>
      <DialogBody>
        <DialogTabs>
          <DialogTab>Fin<u>d</u></DialogTab>
          <DialogTab $on>Re<u>p</u>lace</DialogTab>
        </DialogTabs>
        <DialogPanel>
          <Field>
            <label htmlFor="find">Fi<u>n</u>d what:</label>
            <FieldBox><FieldInput id="find" defaultValue="*Available:" /><FieldDrop aria-label="Recent searches"><DropMark /></FieldDrop></FieldBox>
          </Field>
          <Field>
            <label htmlFor="with">R<u>e</u>place with:</label>
            <FieldBox><FieldInput id="with" /><FieldDrop aria-label="Recent replacements"><DropMark /></FieldDrop></FieldBox>
          </Field>
          <OptionsRow><PushButton $w={78}>Op<u>t</u>ions &gt;&gt;</PushButton></OptionsRow>
        </DialogPanel>
        <DialogActions>
          <PushButton $focus>Replace <u>A</u>ll</PushButton>
          <PushButton><u>R</u>eplace</PushButton>
          <Spacer />
          <PushButton>F<u>i</u>nd All</PushButton>
          <PushButton><u>F</u>ind Next</PushButton>
          <Spacer />
          <PushButton>Close</PushButton>
        </DialogActions>
      </DialogBody>
      <Highlight />
    </Dialog>
  );
}

export default function App() {
  return (
    <>
      <Global />
      <Window>
        <TitleBar>
          <QuickAccess>
            <QuickButton $w={30} aria-label="Save"><SaveIcon /></QuickButton>
            <QuickButton aria-label="Undo"><UndoIcon /></QuickButton>
            <QuickButton $w={8} aria-label="Undo history"><Caret c="#fff" /></QuickButton>
            <QuickButton $w={30} aria-label="Redo"><UndoIcon flip /></QuickButton>
            <QuickButton $w={8} aria-label="Redo history"><Caret c="#fff" /></QuickButton>
            <QuickButton aria-label="Customize toolbar"><CustomizeIcon /></QuickButton>
          </QuickAccess>
          <Title>{"Book1  -  Excel"}</Title>
          <WindowButtons>
            <SignIn>Sign in</SignIn>
            <WindowButton aria-label="Ribbon display options"><svg width="13" height="10" viewBox="0 0 13 10" fill="none" stroke="currentColor"><path d="M0.500 0.500h12v9H0.500zM0.500 2.500h12M6.500 8.500v-4M4.500 6.500l2-2 2 2" /></svg></WindowButton>
            <WindowButton aria-label="Minimize"><svg width="10" height="1" viewBox="0 0 10 1"><path d="M0 0h10v1H0z" fill="currentColor" /></svg></WindowButton>
            <WindowButton aria-label="Restore"><svg width="10" height="10" viewBox="0 0 10 10" fill="none" stroke="currentColor"><path d="M0.500 2.500h7v7h-7zM2.500 2.500v-2h7v7h-2" /></svg></WindowButton>
            <WindowButton aria-label="Close"><svg width="10" height="10" viewBox="0 0 10 10" stroke="currentColor"><path d="M0 0l10 10M10 0L0 10" /></svg></WindowButton>
          </WindowButtons>
        </TitleBar>
        <TabStrip>
          <RibbonTab $file>File</RibbonTab>
          <RibbonTab $active>Home</RibbonTab>
          {["Insert", "Page Layout", "Formulas", "Data", "Review", "View"].map((t) => <RibbonTab key={t}>{t}</RibbonTab>)}
          <TellMe><BulbIcon />Tell me what you want to do</TellMe>
          <Share><ShareIcon />Share</Share>
        </TabStrip>
        <RibbonBar />
        <FormulaBar>
          <NameBox><NameInput aria-label="Name box" defaultValue="D1" /><Caret big /></NameBox>
          <Grip><svg width="2" height="10" viewBox="0 0 2 10"><path d="M0 0h2v2H0zM0 4h2v2H0zM0 8h2v2H0z" fill="#b0b0b0" /></svg></Grip>
          <FormulaActions>
            <IconButton aria-label="Cancel"><svg width="11" height="10" viewBox="0 0 11 10" stroke="#bbb" strokeWidth="2"><path d="M1 0.500l9 9M10 0.500l-9 9" /></svg></IconButton>
            <IconButton aria-label="Enter"><svg width="13" height="10" viewBox="0 0 13 10" fill="none" stroke="#c4c4c4" strokeWidth="2.500"><path d="M1 5l3.500 3.500L12 1" /></svg></IconButton>
            <IconButton><Glyph $i $size={15}>fx</Glyph></IconButton>
          </FormulaActions>
          <FormulaField>
            <FormulaInput aria-label="Formula" defaultValue="Information" />
            <svg width="9" height="7" viewBox="0 0 9 7" fill="none" stroke="#666" strokeWidth="2"><path d="M1 1l3.500 3.500L8 1" /></svg>
          </FormulaField>
        </FormulaBar>
        <SheetArea>
          <SheetFrame><Grid /></SheetFrame>
          <VScroll>
            <ScrollArrow aria-label="Scroll up"><Tri d="u" /></ScrollArrow>
            <VTrack><VThumb /></VTrack>
            <ScrollArrow aria-label="Scroll down"><Tri d="d" /></ScrollArrow>
          </VScroll>
        </SheetArea>
        <SheetBar>
          <SheetNav>
            <NavArrow aria-label="Previous sheet"><Tri d="l" c="#bbb" /></NavArrow>
            <NavArrow aria-label="Next sheet"><Tri d="r" c="#bbb" /></NavArrow>
          </SheetNav>
          <SheetTab>Sheet1</SheetTab>
          <AddSheet aria-label="New sheet"><svg width="16" height="16" viewBox="0 0 16 16" fill="none" stroke="#777"><circle cx="8" cy="8" r="7.500" /><path d="M4 8h8M8 4v8" strokeWidth="2" /></svg></AddSheet>
          <HScroll>
            <Grip><svg width="2" height="10" viewBox="0 0 2 10"><path d="M0 0h2v2H0zM0 4h2v2H0zM0 8h2v2H0z" fill="#b0b0b0" /></svg></Grip>
            <ScrollArrow aria-label="Scroll left"><Tri d="l" /></ScrollArrow>
            <HTrack><HThumb /></HTrack>
            <ScrollArrow aria-label="Scroll right"><Tri d="r" /></ScrollArrow>
          </HScroll>
        </SheetBar>
        <StatusBar>
          <span>Ready</span>
          <ViewButtons>
            <ViewButton $on aria-label="Normal view"><svg width="13" height="12" viewBox="0 0 13 12" fill="none" stroke="#666"><path d="M0.500 0.500h12v11H0.500zM4.500 0v12M8.500 0v12M0 4.500h13M0 8.500h13" /></svg></ViewButton>
            <ViewButton aria-label="Page layout view"><svg width="14" height="12" viewBox="0 0 14 12" fill="none" stroke="#666"><path d="M0.500 0.500h13v11H0.500zM3.500 2.500h7v7h-7zM5 4.500h4M5 6.500h4M5 8.500h4" /></svg></ViewButton>
            <ViewButton aria-label="Page break preview"><svg width="14" height="12" viewBox="0 0 14 12" fill="none" stroke="#666"><path d="M0.500 0.500h13v11H0.500zM0.500 7.500h8v-7M4.500 0.500v7" /></svg></ViewButton>
          </ViewButtons>
          <ZoomButton aria-label="Zoom out"><svg width="6" height="2" viewBox="0 0 6 2"><path d="M0 0h6v2H0z" fill="#666" /></svg></ZoomButton>
          <ZoomRange type="range" aria-label="Zoom" min={0} max={100} defaultValue={50} />
          <ZoomButton aria-label="Zoom in"><svg width="8" height="8" viewBox="0 0 8 8"><path d="M0 3h8v2H0zM3 0h2v8H3z" fill="#666" /></svg></ZoomButton>
          <ZoomText>100%</ZoomText>
        </StatusBar>
      </Window>
      <FindReplace />
    </>
  );
}
